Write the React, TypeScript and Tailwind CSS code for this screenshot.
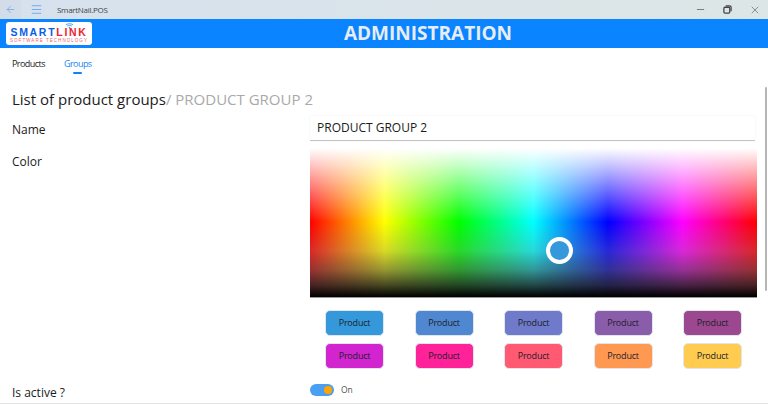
import { ArrowLeft, Menu, Minus, X } from 'lucide-react';

const swatches = [
  'bg-[#3498db]', 'bg-[#4f88d0]', 'bg-[#6f7bca]', 'bg-[#8a5dab]', 'bg-[#9b4890]',
  'bg-[#d225d0]', 'bg-[#ff2299]', 'bg-[#ff5a72]', 'bg-[#ff9951]', 'bg-[#ffcc50]',
];

const RestoreIcon = () => (
  <svg width="9" height="9" viewBox="0 0 10 10" fill="none" stroke="#444" strokeWidth="1.4">
    <rect x="1" y="2.500" width="6.500" height="6.500" rx="1.200" />
    <path d="M3 1h4.500A1.500 1.500 0 0 1 9 2.500V7" />
  </svg>
);

const Logo = () => (
  <div className="relative ml-[6px] mt-[3px] flex h-[23px] w-[86px] shrink-0 flex-col items-center rounded-[3px] bg-white pt-[6px]">
    <svg className="absolute left-[59px] top-[1px]" width="9" height="6" viewBox="0 0 10 6" fill="none" stroke="#2f9bf0" strokeWidth="1">
      <path d="M1 1.500c2.500-1.300 5.500-1.300 8 0M2.500 3c1.600-.8 3.400-.8 5 0" />
      <circle cx="5" cy="5" r=".6" fill="#2f9bf0" />
    </svg>
    <div className="whitespace-nowrap text-[10.5px] leading-[9px] font-black tracking-[1.7px] font-['Liberation_Sans',sans-serif] text-[#0a5ee8]">
      SMART<span className="text-[#ee2430]">LINK</span>
    </div>
    <div className="mt-[1px] whitespace-nowrap text-[4.5px] leading-[5px] tracking-[1.05px] font-['Liberation_Sans',sans-serif] text-[#e8606a]">
      SOFTWARE TECHNOLOGY
    </div>
  </div>
);

const App = () => {
  return (
    <div className="relative flex h-[404px] w-[768px] flex-col overflow-hidden bg-white font-['Open_Sans',sans-serif] text-[#1b1b1b]">
      {/* Title bar */}
      <div className="flex h-[19px] items-center bg-[linear-gradient(to_right,#d6e1ee,#dde6e6)]">
        <div className="flex h-[19px] w-[21px] items-center justify-center bg-[#d2dde9]">
          <ArrowLeft size={11} strokeWidth={1.4} className="text-[#5a9be8]" />
        </div>
        <Menu size={13} strokeWidth={1.2} className="ml-[9px] text-[#3d8fe8]" />
        <span className="ml-[14px] text-[8px] tracking-[-0.3px] text-[#444]">SmartNail.POS</span>
        <div className="ml-auto flex items-center gap-[17px] pr-[7px] text-[#444]">
          <Minus size={11} strokeWidth={1.4} />
          <RestoreIcon />
          <X size={12} strokeWidth={1.1} />
        </div>
      </div>

      {/* Header */}
      <div className="flex h-[29px] bg-[#0a84ff]">
        <Logo />
        <div className="flex flex-1 items-center justify-center pr-[4px] text-[19px] font-bold text-[#e6edf5]">
          ADMINISTRATION
        </div>
      </div>

      {/* Tabs */}
      <div className="flex gap-[19px] pl-[12px] pt-[9px] text-[9px] leading-[14px] tracking-[-0.55px]">
        <span>Products</span>
        <span className="relative text-[#1a86f0]">
          Groups
          <span className="absolute left-[9px] top-[15px] h-[2px] w-[9px] rounded-full bg-[#0a84ff]" />
        </span>
      </div>

      {/* Form */}
      <div className="pl-[12px] pt-[16px]">
        <div className="whitespace-nowrap text-[15px] leading-[24px]">
          List of product groups<span className="text-[#a9a9a9]">/ PRODUCT GROUP 2</span>
        </div>

        <div className="mt-[5px] flex">
          <div className="w-[298px] pt-[5px] text-[12px] leading-[18px]">Name</div>
          <div className="flex h-[25px] w-[445px] items-center rounded-t-[2px] border-b border-[#c4c4c4] bg-white pl-[7px] text-[12px] shadow-[0_0_2px_rgba(0,0,0,0.08)]">
            PRODUCT GROUP 2
          </div>
        </div>

        <div className="mt-[7px] flex">
          <div className="w-[298px] pt-[5px] text-[12px] leading-[18px]">Color</div>
          <div className="w-[447px]">
            <div className="relative h-[150px] border-b border-[#999] bg-[linear-gradient(to_right,#f00_0%,#ff0_16.67%,#0f0_33.33%,#0ff_50%,#00f_66.67%,#f0f_83.33%,#f00_100%)]">
              <div className="h-full bg-[linear-gradient(to_bottom,#fff_0%,rgba(255,255,255,0)_49.500%,rgba(130,130,130,0)_50%,rgba(130,130,130,0.3)_69%,rgba(80,80,80,0.6)_82%,rgba(40,40,40,0.85)_92%,#000_100%)]" />
              <div className="absolute left-[236px] top-[89px] h-[27px] w-[27px] rounded-full border-[4px] border-white bg-[#3498db]" />
            </div>

            <div className="mt-[12px] grid [grid-template-columns:repeat(4,89.5px)_59px] gap-y-[7px] pl-[15px]">
              {swatches.map((color, index) => (
                <div
                  key={index}
                  className={`flex h-[26px] w-[59px] items-center justify-center rounded-[5px] border border-[#dfe6ee] text-[9px] tracking-[-0.2px] text-[#1d1d2b] ${color}`}
                >
                  Product
                </div>
              ))}
            </div>
          </div>
        </div>

        <div className="mt-[9px] flex items-center">
          <div className="w-[298px] pt-[6px] text-[12px] leading-[18px]">Is active ?</div>
          <div className="flex items-center">
            <div className="flex h-[12px] w-[24px] items-center justify-end rounded-full bg-[#4a9ff0] pr-[2px]">
              <div className="h-[8px] w-[8px] rounded-full bg-[#ffa500]" />
            </div>
            <span className="ml-[7px] text-[8.5px] text-[#555]">On</span>
          </div>
        </div>
      </div>

      {/* Scrollbar */}
      <div className="absolute left-[765px] top-[87px] h-[204px] w-[2px] rounded-full bg-[#b5b5b5]" />
      {/* Bottom edge */}
      <div className="absolute bottom-0 left-0 h-[1px] w-full bg-[#e2e2e2]" />
    </div>
  );
};

export default App;
